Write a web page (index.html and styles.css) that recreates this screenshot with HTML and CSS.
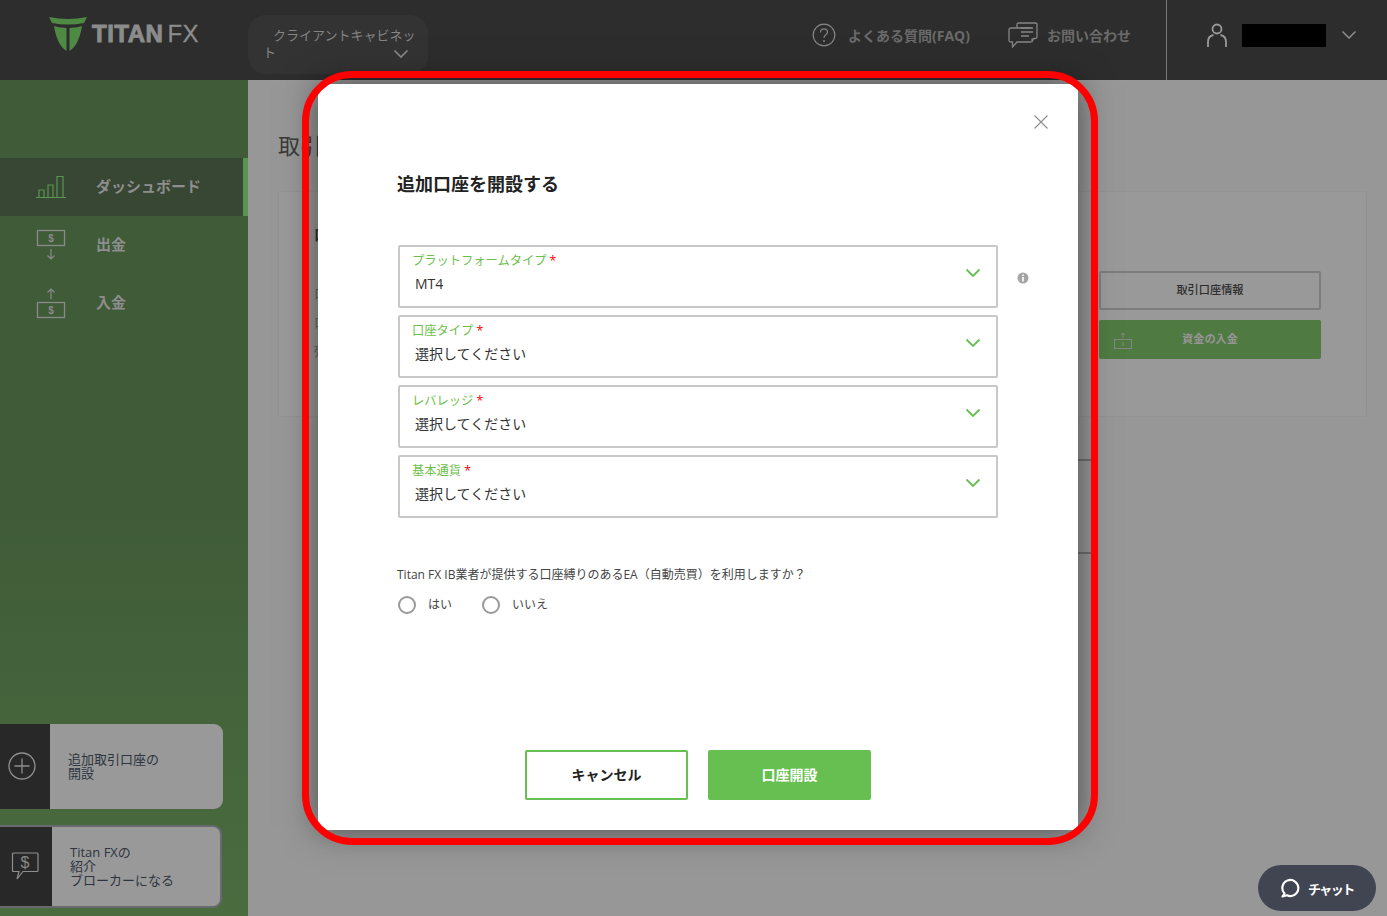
FILE: index.html
```html
<!DOCTYPE html>
<html lang="ja">

<head>
    <meta charset="UTF-8">
    <meta name="viewport" content="width=device-width, initial-scale=1.0">
    <title>Titan FX</title>
    <link rel="stylesheet" href="styles.css">
</head>

<body>
    <header class="topbar">
        <div class="logo">
            <svg class="logo-mark" width="38" height="36" viewBox="0 0 38 36">
                <path d="M0 1 Q19 5 38 1 L35 7 Q19 10 3 7 Z" fill="#4f8a45" />
                <path d="M5 10 Q10 11.500 15 11.800 L17.500 12 V35 Q8 29 5 10 Z" fill="#4f8a45" />
                <path d="M33 10 Q28 11.500 23 11.800 L20.500 12 V35 Q30 29 33 10 Z" fill="#4f8a45" />
            </svg>
            <span class="logo-text">TITAN<span class="logo-thin">FX</span></span>
        </div>
        <div class="cabinet-menu">
            <span class="cabinet-label">クライアントキャビネット</span>
            <svg class="cabinet-chevron" width="16" height="10" viewBox="0 0 16 10">
                <path d="M1.500 1.500 L8 8 L14.500 1.500" fill="none" stroke="#8a8a8a" stroke-width="1.600" />
            </svg>
        </div>
        <div class="help-links">
            <div class="help-link">
                <svg width="24" height="24" viewBox="0 0 24 24">
                    <circle cx="12" cy="12" r="10.800" fill="none" stroke="#858585" stroke-width="1.200" />
                    <path d="M8.500 9.500 Q8.500 5.800 12 5.800 Q15.500 5.800 15.500 9 Q15.500 10.800 13.500 12 Q12 13 12 15" fill="none" stroke="#858585" stroke-width="1.200" />
                    <circle cx="12" cy="18" r="1" fill="#858585" />
                </svg>
                <span>よくある質問(FAQ)</span>
            </div>
            <div class="help-link">
                <svg width="30" height="26" viewBox="0 0 30 26">
                    <path d="M9 6 V2.500 Q9 1 10.500 1 H27.500 Q29 1 29 2.500 V15 Q29 16.500 27.500 16.500 H25.500 L24 20 V16.500" fill="none" stroke="#858585" stroke-width="1.300" />
                    <path d="M23.500 6 H3 Q1 6 1 8 V18.500 Q1 20 3 20 H4.500 L4.500 25 L9 20 H23.500" fill="none" stroke="#858585" stroke-width="1.300" />
                    <path d="M13 6 H25 M13 10 H25 M13 14 H21" fill="none" stroke="#858585" stroke-width="1.300" />
                </svg>
                <span>お問い合わせ</span>
            </div>
        </div>
        <div class="account">
            <svg width="20" height="25" viewBox="0 0 20 25">
                <circle cx="10" cy="6" r="4.500" fill="none" stroke="#9a9a9a" stroke-width="1.800" />
                <path d="M1 24 V19 Q1 13 6.500 12 M19 24 V19 Q19 13 13.500 12" fill="none" stroke="#9a9a9a" stroke-width="1.800" />
            </svg>
            <div class="account-name"></div>
            <svg width="16" height="10" viewBox="0 0 16 10">
                <path d="M1.500 1.500 L8 8 L14.500 1.500" fill="none" stroke="#8f8f8f" stroke-width="1.500" />
            </svg>
        </div>
    </header>

    <div class="page">
        <aside class="sidebar">
            <nav class="side-nav">
                <div class="side-item active">
                    <svg width="32" height="24" viewBox="0 0 32 24">
                        <path d="M1 22.500 H31 M4 22.500 V15 H9 V22.500 M13 22.500 V10 H18 V22.500 M22 22.500 V1.500 H28 V22.500" fill="none" stroke="#599450" stroke-width="1.200" />
                    </svg>
                    <span>ダッシュボード</span>
                </div>
                <div class="side-item">
                    <svg width="32" height="32" viewBox="0 0 32 32">
                        <rect x="2.500" y="1.500" width="27" height="15" fill="none" stroke="#8a8a8a" stroke-width="1.300" />
                        <text x="16" y="13" class="dollar">$</text>
                        <path d="M16 20 V30 M12.500 26.500 L16 30 L19.500 26.500" fill="none" stroke="#8a8a8a" stroke-width="1.200" />
                    </svg>
                    <span>出金</span>
                </div>
                <div class="side-item">
                    <svg width="32" height="32" viewBox="0 0 32 32">
                        <path d="M16 12 V2 M12.500 5.500 L16 2 L19.500 5.500" fill="none" stroke="#8a8a8a" stroke-width="1.200" />
                        <rect x="2.500" y="15.500" width="27" height="15" fill="none" stroke="#8a8a8a" stroke-width="1.300" />
                        <text x="16" y="27" class="dollar">$</text>
                    </svg>
                    <span>入金</span>
                </div>
            </nav>
            <div class="promos">
                <div class="promo">
                    <div class="promo-icon">
                        <svg width="28" height="28" viewBox="0 0 28 28">
                            <circle cx="14" cy="14" r="13" fill="none" stroke="#8f8f8f" stroke-width="1.300" />
                            <path d="M14 6.500 V21.500 M6.500 14 H21.500" fill="none" stroke="#8f8f8f" stroke-width="1.300" />
                        </svg>
                    </div>
                    <div class="promo-text">追加取引口座の<br>開設</div>
                </div>
                <div class="promo promo-ib">
                    <div class="promo-icon">
                        <svg width="28" height="28" viewBox="0 0 28 28">
                            <path d="M2.500 1 H26 Q27 1 27 2 V18.500 Q27 19.500 26 19.500 H12 L6 27 L8 19.500 H2.500 Q1.500 19.500 1.500 18.500 V2 Q1.500 1 2.500 1 Z" fill="none" stroke="#8f8f8f" stroke-width="1.200" />
                            <text x="14" y="15.500" class="dollar dollar-big">$</text>
                        </svg>
                    </div>
                    <div class="promo-text">Titan FXの<br>紹介<br>ブローカーになる</div>
                </div>
            </div>
        </aside>

        <main class="content">
            <h1 class="page-title">取引口座</h1>
            <section class="account-card">
                <div class="account-info">
                    <h2>口座情報</h2>
                    <p>口座番号</p>
                    <p>口座タイプ</p>
                    <p>残高</p>
                </div>
                <div class="account-actions">
                    <div class="btn-outline">取引口座情報</div>
                    <div class="btn-fund">
                        <svg width="18" height="18" viewBox="0 0 18 18">
                            <path d="M9 6 V1 M7 3 L9 1 L11 3" fill="none" stroke="#8a8a8a" stroke-width="0.900" />
                            <rect x="0.500" y="7.500" width="17" height="9" fill="none" stroke="#8a8a8a" stroke-width="0.900" />
                            <path d="M9 10 V14" stroke="#8a8a8a" stroke-width="1" />
                        </svg>
                        <span>資金の入金</span>
                    </div>
                </div>
            </section>
            <div class="history"></div>
        </main>
    </div>

    <div class="modal">
        <div class="modal-close">
            <svg width="16" height="16" viewBox="0 0 16 16">
                <path d="M1.500 1.500 L14.500 14.500 M14.500 1.500 L1.500 14.500" fill="none" stroke="#8c8c8c" stroke-width="1.100" />
            </svg>
        </div>
        <h2 class="modal-title">追加口座を開設する</h2>
        <div class="fields">
            <div class="field-row">
                <div class="field">
                    <div class="field-label">プラットフォームタイプ <b>*</b></div>
                    <div class="field-value">MT4</div>
                    <svg class="field-chevron" width="16" height="10" viewBox="0 0 16 10">
                        <path d="M1.500 1.500 L8 8 L14.500 1.500" fill="none" stroke="#66bf50" stroke-width="1.800" />
                    </svg>
                </div>
                <svg class="info-icon" width="12" height="12" viewBox="0 0 12 12">
                    <circle cx="6" cy="6" r="5.500" fill="#a5a5a5" />
                    <path d="M6 5 V9.500 M6 2.500 V4" stroke="#fff" stroke-width="1.600" />
                </svg>
            </div>
            <div class="field">
                <div class="field-label">口座タイプ <b>*</b></div>
                <div class="field-value">選択してください</div>
                <svg class="field-chevron" width="16" height="10" viewBox="0 0 16 10">
                    <path d="M1.500 1.500 L8 8 L14.500 1.500" fill="none" stroke="#66bf50" stroke-width="1.800" />
                </svg>
            </div>
            <div class="field">
                <div class="field-label">レバレッジ <b>*</b></div>
                <div class="field-value">選択してください</div>
                <svg class="field-chevron" width="16" height="10" viewBox="0 0 16 10">
                    <path d="M1.500 1.500 L8 8 L14.500 1.500" fill="none" stroke="#66bf50" stroke-width="1.800" />
                </svg>
            </div>
            <div class="field">
                <div class="field-label">基本通貨 <b>*</b></div>
                <div class="field-value">選択してください</div>
                <svg class="field-chevron" width="16" height="10" viewBox="0 0 16 10">
                    <path d="M1.500 1.500 L8 8 L14.500 1.500" fill="none" stroke="#66bf50" stroke-width="1.800" />
                </svg>
            </div>
        </div>
        <p class="question">Titan FX IB業者が提供する口座縛りのあるEA（自動売買）を利用しますか？</p>
        <div class="radios">
            <div class="radio"><i></i>はい</div>
            <div class="radio"><i></i>いいえ</div>
        </div>
        <div class="modal-actions">
            <div class="btn-cancel">キャンセル</div>
            <div class="btn-submit">口座開設</div>
        </div>
    </div>

    <div class="highlight-ring"></div>

    <div class="chat-btn">
        <svg width="20" height="20" viewBox="0 0 20 20">
            <path d="M4.500 15.500 A8 8 0 1 1 7 17.300 L2.500 18.500 Z" fill="none" stroke="#fff" stroke-width="2.200" stroke-linejoin="round" />
        </svg>
        <span>チャット</span>
    </div>
</body>

</html>
```

FILE: styles.css
```css
* {
    box-sizing: border-box;
}

body {
    margin: 0;
    height: 100vh;
    overflow: hidden;
    background: #979797;
    color: #333;
    font-family: "Open Sans", "Noto Sans CJK JP", sans-serif;
}

.topbar {
    display: flex;
    height: 80px;
    background: #2d2d2d;
}

.logo {
    display: flex;
    align-items: flex-start;
    width: 248px;
    padding: 16px 0 0 49px;
    flex-shrink: 0;
}

.logo-text {
    margin: 4px 0 0 5px;
    font-family: "Liberation Sans", sans-serif;
    font-size: 24px;
    font-weight: 700;
    line-height: 28px;
    letter-spacing: 0.5px;
    color: #8c8c8c;
    -webkit-text-stroke: 0.9px #8c8c8c;
}

.logo-thin {
    margin-left: 4px;
    font-weight: 400;
    -webkit-text-stroke: 0.3px #8c8c8c;
}

.cabinet-menu {
    position: relative;
    width: 180px;
    height: 59px;
    margin-top: 15px;
    padding: 12px 8px 0 15px;
    border-radius: 18px;
    background: #333;
    font-size: 13px;
    line-height: 17px;
    color: #858585;
    text-indent: 10px;
}

.cabinet-chevron {
    position: absolute;
    left: 145px;
    top: 34px;
}

.help-links {
    display: flex;
    align-items: center;
    gap: 38px;
    margin-left: auto;
    padding: 0 35px 10px 0;
}

.help-link {
    display: flex;
    align-items: center;
    gap: 9px;
    font-size: 14px;
    font-weight: 700;
    color: #6a6a6a;
}

.help-link:first-child {
    gap: 12px;
}

.account {
    display: flex;
    align-items: center;
    width: 221px;
    padding: 0 0 10px 40px;
    border-left: 1px solid #777;
}

.account-name {
    width: 84px;
    height: 23px;
    margin: 0 15px;
    background: #000;
}

.page {
    display: flex;
    height: 836px;
}

.sidebar {
    display: flex;
    flex-direction: column;
    width: 248px;
    padding-top: 78px;
    background: linear-gradient(#3f5b38 50%, #4a6c3f);
    flex-shrink: 0;
}

.side-item {
    display: flex;
    align-items: center;
    gap: 29px;
    height: 58px;
    padding-left: 35px;
    font-size: 15px;
    font-weight: 700;
    color: #8e8e8e;
}

.side-item span {
    margin-bottom: 4px;
}

.side-item.active {
    background: #384733;
    border-right: 5px solid #599450;
}

.dollar {
    font-family: "Liberation Sans", sans-serif;
    font-size: 10px;
    font-weight: 700;
    text-anchor: middle;
    fill: #8a8a8a;
}

.dollar-big {
    font-size: 16px;
    font-weight: 400;
}

.promos {
    display: flex;
    flex-direction: column;
    gap: 16px;
    margin-top: auto;
    padding-bottom: 8px;
}

.promo {
    display: flex;
    width: 223px;
    height: 85px;
    overflow: hidden;
    border-radius: 0 9px 9px 0;
    background: #999;
}

.promo-icon {
    display: flex;
    align-items: center;
    justify-content: center;
    width: 50px;
    padding: 0 6px 2px 0;
    background: #282828;
    flex-shrink: 0;
}

.promo-text {
    align-self: center;
    padding: 0 0 1px 18px;
    font-size: 13px;
    line-height: 14px;
    color: #2d3440;
}

.promo-ib {
    width: 222px;
    height: 83px;
    border: 2px solid #686a70;
    border-left: 0;
}

.promo-ib .promo-icon {
    width: 52px;
    padding-right: 2px;
}

.content {
    flex: 1;
    padding: 50px 20px 0 30px;
}

.page-title {
    margin: 0 0 31px;
    font-size: 22px;
    font-weight: 400;
    line-height: 30px;
    color: #3a3a3a;
}

.account-card {
    display: flex;
    justify-content: space-between;
    height: 226px;
    padding: 31px 45px 0 35px;
    border: 1px solid #929292;
    border-radius: 2px;
    background: #999;
}

.account-info h2 {
    margin: 0 0 38px;
    font-size: 15px;
    line-height: 22px;
    color: #333;
}

.account-info p {
    margin: 0 0 8px;
    font-size: 13px;
    line-height: 21px;
    color: #666;
}

.account-actions {
    display: flex;
    flex-direction: column;
    gap: 10px;
    width: 222px;
    padding-top: 48px;
}

.btn-outline,
.btn-fund {
    display: flex;
    align-items: center;
    justify-content: center;
    height: 39px;
    padding-bottom: 3px;
    border-radius: 2px;
    font-size: 11.2px;
}

.btn-outline {
    border: 2px solid #7d7d7d;
    font-weight: 500;
    color: #2d2d2d;
}

.btn-fund {
    position: relative;
    background: #4f7a42;
    font-weight: 700;
    color: #959595;
}

.btn-fund svg {
    position: absolute;
    left: 15px;
    top: 12px;
}

.history {
    width: 761px;
    height: 95px;
    margin: 42px 0 0 52px;
    border-top: 2px solid #6f6f6f;
    border-bottom: 2px solid #6f6f6f;
}

.modal {
    position: absolute;
    left: 318px;
    top: 84px;
    display: flex;
    flex-direction: column;
    width: 760px;
    height: 746px;
    padding: 87px 80px 30px;
    background: #fff;
    box-shadow: 0 0 32px rgba(0, 0, 0, 0.5);
}

.modal-close {
    position: absolute;
    top: 29px;
    right: 29px;
    height: 16px;
}

.modal-title {
    margin: 0 0 47px -1px;
    font-size: 18px;
    font-weight: 700;
    line-height: 27px;
    color: #222;
}

.fields {
    display: flex;
    flex-direction: column;
    gap: 7px;
}

.field-row {
    display: flex;
    align-items: center;
    gap: 19px;
}

.field {
    position: relative;
    width: 600px;
    height: 63px;
    padding: 4px 0 0 12px;
    border: 2px solid #c8c8c8;
    border-radius: 2px;
    flex-shrink: 0;
}

.field-label {
    font-size: 12.25px;
    line-height: 19px;
    color: #6cc04a;
}

.field-label b {
    font-weight: 400;
    color: #f00;
}

.field-value {
    margin: 4px 0 0 3px;
    font-size: 14px;
    line-height: 20px;
    color: #333;
}

.field-chevron {
    position: absolute;
    right: 15px;
    top: 21px;
}

.info-icon {
    margin-top: 3px;
    flex-shrink: 0;
}

.question {
    margin: 48px 0 0 -1px;
    font-size: 12px;
    line-height: 18px;
    color: #444;
}

.radios {
    display: flex;
    gap: 30px;
    margin-top: 12px;
}

.radio {
    display: flex;
    align-items: center;
    gap: 12px;
    font-size: 12px;
    line-height: 18px;
    color: #444;
}

.radio i {
    width: 18px;
    height: 18px;
    border: 2px solid #999;
    border-radius: 50%;
}

.modal-actions {
    display: flex;
    justify-content: center;
    gap: 20px;
    margin-top: auto;
}

.btn-cancel,
.btn-submit {
    display: flex;
    align-items: center;
    justify-content: center;
    width: 163px;
    height: 50px;
    padding-bottom: 2px;
    border-radius: 2px;
    font-size: 14px;
    font-weight: 700;
}

.btn-cancel {
    border: 2px solid #66bf50;
    color: #222;
}

.btn-submit {
    background: #66bf50;
    color: #fff;
}

.highlight-ring {
    position: absolute;
    left: 302px;
    top: 71px;
    width: 796px;
    height: 774px;
    border: 7px solid #f00;
    border-radius: 50px;
}

.chat-btn {
    position: fixed;
    right: 11px;
    bottom: 5px;
    display: flex;
    align-items: center;
    gap: 8px;
    width: 118px;
    height: 46px;
    padding-left: 22px;
    border-radius: 23px;
    background: #414552;
    font-size: 13px;
    font-weight: 700;
    letter-spacing: -1.5px;
    color: #fff;
}
```
